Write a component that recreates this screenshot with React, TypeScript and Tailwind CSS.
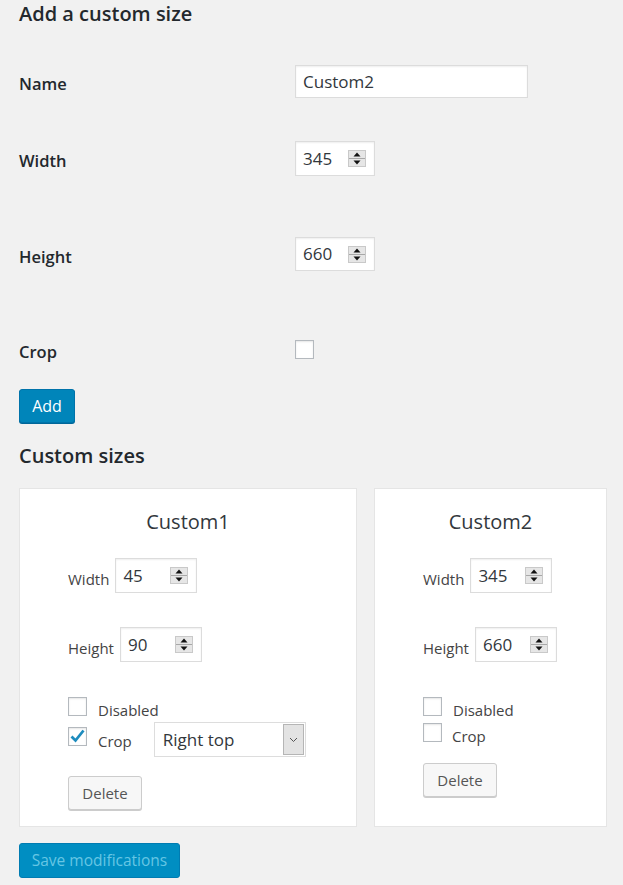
import React from "react";

function Spinner() {
  return (
    <svg width="18" height="17" viewBox="0 0 18 17" className="shrink-0">
      <rect x="0.5" y="0.5" width="17" height="16" fill="#e6e6e6" stroke="#c9c9c9" />
      <line x1="1" y1="8.5" x2="17" y2="8.5" stroke="#a8a8a8" />
      <path d="M9 2.5 L12.5 6.5 L5.5 6.5 Z" fill="#111" />
      <path d="M5.5 10.5 L12.5 10.5 L9 14.5 Z" fill="#111" />
    </svg>
  );
}

function NumberBox({ value, className }: { value: string; className: string }) {
  return (
    <div
      className={`flex items-center justify-between border border-[#dcdcdc] bg-white pl-[7px] pr-[8px] text-[17px] text-[#32373c] shadow-[inset_0_1px_2px_rgba(0,0,0,0.07)] ${className}`}
    >
      <span>{value}</span>
      <Spinner />
    </div>
  );
}

function Check({ checked }: { checked?: boolean }) {
  return (
    <span className="flex h-[19px] w-[19px] shrink-0 items-center justify-center border border-[#b4b9be] bg-white shadow-[inset_0_1px_2px_rgba(0,0,0,0.1)]">
      {checked && (
        <svg width="17" height="17" viewBox="0 0 17 17">
          <path d="M2.5 8.5 L6.5 12.5 L14.5 2.5" fill="none" stroke="#1e8cbe" strokeWidth="2.8" />
        </svg>
      )}
    </span>
  );
}

function DeleteButton({ className }: { className: string }) {
  return (
    <button
      className={`h-[34px] w-[74px] rounded-[3px] border border-[#cccccc] bg-[#f7f7f7] text-[15px] text-[#555555] shadow-[0_1px_0_#cccccc] ${className}`}
    >
      Delete
    </button>
  );
}

function SizeCard({
  name,
  width,
  height,
  wide,
  crop,
}: {
  name: string;
  width: string;
  height: string;
  wide?: boolean;
  crop?: boolean;
}) {
  return (
    <div
      className={`h-[339px] border border-[#e5e5e5] bg-white pl-[48px] pt-[19px] text-[15px] text-[#444444] ${
        wide ? "w-[338px]" : "w-[233px]"
      }`}
    >
      <div className="-ml-[48px] text-center text-[20px] leading-[28px] text-[#32373c]">{name}</div>
      <div className="mt-[22px] flex items-start">
        <span className="pt-[11px] leading-[20px]">Width</span>
        <NumberBox value={width} className="ml-[6px] h-[35px] w-[82px]" />
      </div>
      <div className="mt-[34px] flex items-start">
        <span className="pt-[11px] leading-[20px]">Height</span>
        <NumberBox value={height} className="ml-[6px] h-[35px] w-[82px]" />
      </div>
      <div className="mt-[35px] flex items-start">
        <Check />
        <span className="ml-[11px] pt-[3px] leading-[20px]">Disabled</span>
      </div>
      {crop ? (
        <div className="mt-[2px] flex items-start">
          <div className="pt-[5px]">
            <Check checked />
          </div>
          <span className="ml-[11px] pt-[9px] leading-[20px]">Crop</span>
          <div className="ml-[22px] flex h-[35px] w-[152px] items-stretch border border-[#dddddd] bg-white text-[17px] text-[#32373c]">
            <span className="flex-1 pl-[8px] leading-[33px]">Right top</span>
            <span className="m-[1px] flex w-[21px] items-center justify-center border border-[#b5b5b5] bg-[#e3e3e3]">
              <svg width="9" height="6" viewBox="0 0 9 6">
                <path d="M1 1 L4.5 4.5 L8 1" fill="none" stroke="#555" strokeWidth="1" />
              </svg>
            </span>
          </div>
        </div>
      ) : (
        <div className="mt-[3px] flex items-start">
          <Check />
          <span className="ml-[10px] pt-[3px] leading-[20px]">Crop</span>
        </div>
      )}
      <DeleteButton className={crop ? "mt-[19px]" : "mt-[17px]"} />
    </div>
  );
}

export default function App() {
  return (
    <div className="min-h-[885px] w-[623px] bg-[#f1f1f1] pl-[19px] font-['Open_Sans','Noto_Sans',sans-serif] text-[#23282d]">
      <h2 className="text-[20px] font-semibold leading-[28px]">Add a custom size</h2>

      <div className="mt-[37px] flex items-start">
        <label className="w-[276px] pt-[7px] text-[16.5px] font-semibold leading-[24px]">Name</label>
        <div className="flex h-[33px] w-[233px] items-center border border-[#dcdcdc] bg-white pl-[7px] text-[17px] text-[#32373c] shadow-[inset_0_1px_2px_rgba(0,0,0,0.07)]">
          Custom2
        </div>
      </div>

      <div className="mt-[43px] flex items-start">
        <label className="w-[276px] pt-[8px] text-[16.5px] font-semibold leading-[24px]">Width</label>
        <NumberBox value="345" className="h-[35px] w-[80px]" />
      </div>

      <div className="mt-[61px] flex items-start">
        <label className="w-[276px] pt-[8px] text-[16.5px] font-semibold leading-[24px]">Height</label>
        <NumberBox value="660" className="h-[34px] w-[80px]" />
      </div>

      <div className="mt-[69px] flex items-start">
        <label className="w-[276px] text-[16.5px] font-semibold leading-[24px]">Crop</label>
        <Check />
      </div>

      <button className="mt-[25px] h-[34px] w-[56px] rounded-[3px] border border-[#0073aa] bg-[#0085ba] text-[16px] text-white shadow-[0_1px_0_#006799]">
        Add
      </button>

      <h2 className="mt-[19px] text-[20px] font-semibold leading-[28px]">Custom sizes</h2>

      <div className="mt-[18px] flex gap-[17px]">
        <SizeCard name="Custom1" width="45" height="90" wide crop />
        <SizeCard name="Custom2" width="345" height="660" />
      </div>

      <button className="mt-[16px] h-[35px] w-[161px] rounded-[3px] border border-[#007cb2] bg-[#008ec2] text-[15.5px] text-[#66c6e4]">
        Save modifications
      </button>
    </div>
  );
}
